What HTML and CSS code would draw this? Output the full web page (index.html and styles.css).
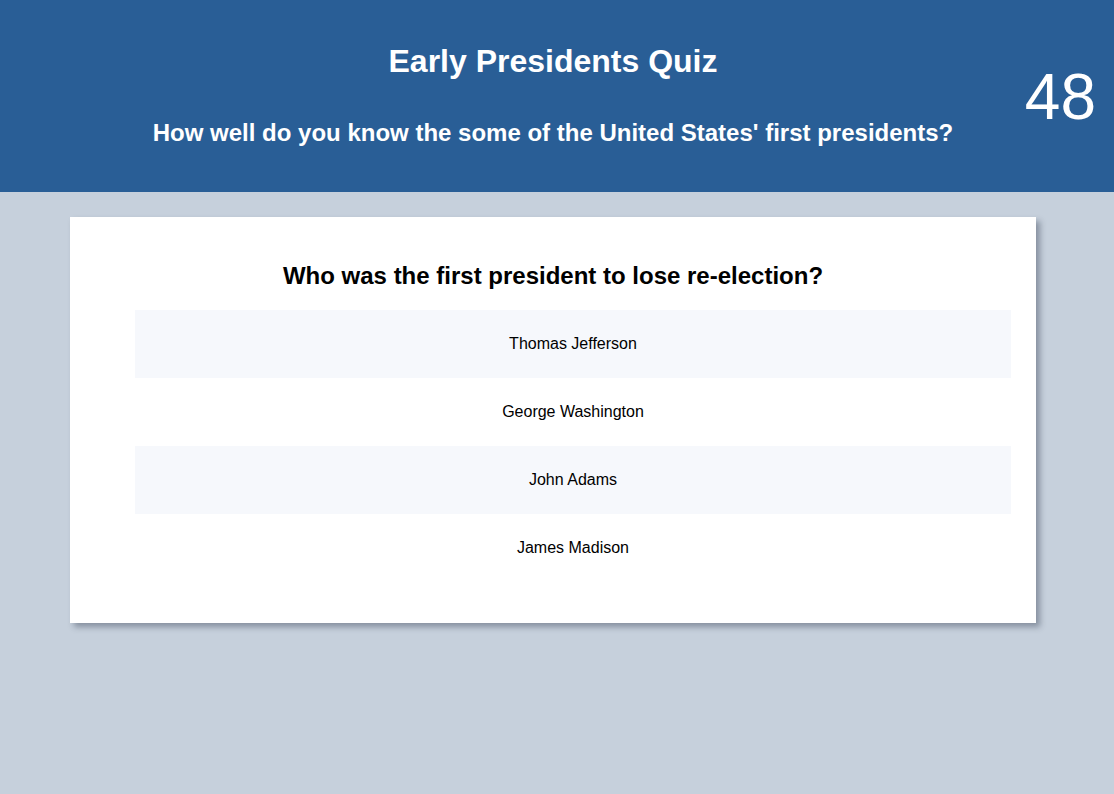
FILE: index.html
```html
<!DOCTYPE html>
<html>
<head>
<meta charset="utf-8">
<link rel="stylesheet" href="styles.css">
</head>
<body>
<header class="header">
  <h1 class="title">Early Presidents Quiz</h1>
  <h2 class="subtitle">How well do you know the some of the United States' first presidents?</h2>
  <div class="score">48</div>
</header>
<main class="main">
  <section class="card">
    <h2 class="question">Who was the first president to lose re-election?</h2>
    <ul class="answers">
      <li class="answer">Thomas Jefferson</li>
      <li class="answer">George Washington</li>
      <li class="answer">John Adams</li>
      <li class="answer">James Madison</li>
    </ul>
  </section>
</main>
</body>
</html>
```
FILE: styles.css
```css
html, body {
  margin: 0;
  padding: 0;
}
body {
  background: #c6d0dc;
  font-family: "Liberation Sans", Arial, sans-serif;
  min-height: 794px;
}
.header {
  position: relative;
  background: #295e96;
  color: #fff;
  height: 192px;
  box-sizing: border-box;
  padding: 43px 8px 0 0;
  text-align: center;
}
.title {
  margin: 0;
  font-size: 32px;
  font-weight: bold;
  line-height: 37px;
}
.subtitle {
  margin: 39px 0 0;
  font-size: 24px;
  font-weight: bold;
  line-height: 28px;
}
.score {
  position: absolute;
  top: 60px;
  right: 18px;
  font-size: 64px;
  line-height: 74px;
}
.main {
  padding: 25px 78px 0 70px;
}
.card {
  background: #fff;
  padding: 25px;
  box-shadow: 4px 4px 6px rgba(40, 50, 70, 0.4);
}
.question {
  margin: 20px 0 20px;
  font-size: 24px;
  font-weight: bold;
  line-height: normal;
  text-align: center;
  color: #000;
}
.answers {
  list-style: none;
  margin: 0 0 16px;
  padding: 0 0 0 40px;
}
.answer {
  padding: 25px 0;
  font-size: 16px;
  line-height: normal;
  text-align: center;
  color: #000;
}
.answer:nth-child(odd) {
  background: #f6f8fc;
}
```
